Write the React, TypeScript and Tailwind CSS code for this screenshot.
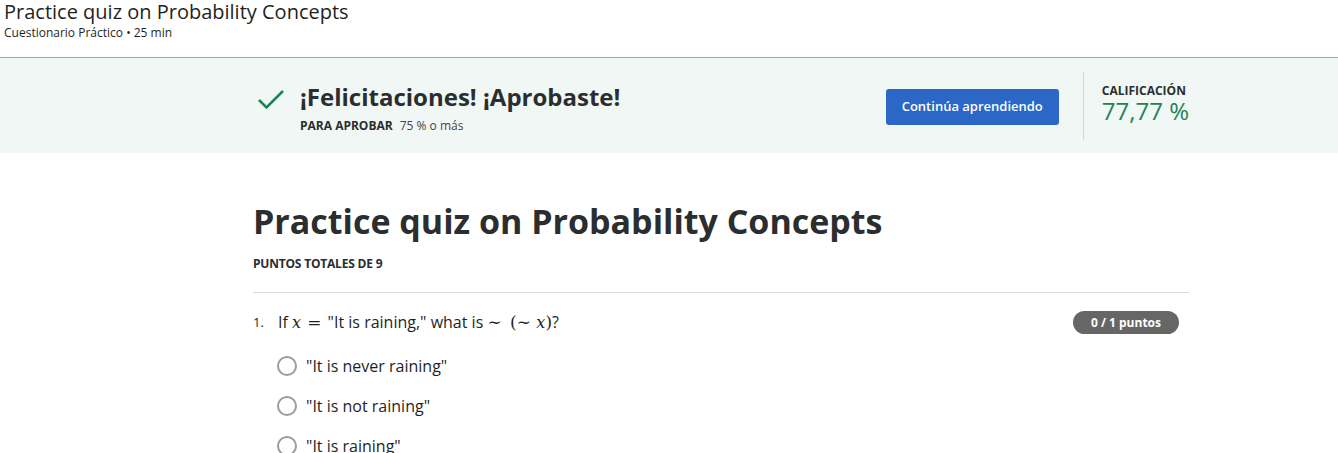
const font = { fontFamily: '"Open Sans", "Noto Sans", sans-serif' };
const serif = { fontFamily: '"DejaVu Serif", "Liberation Serif", serif' };

function Radio({ label }: { label: string }) {
  return (
    <label className="flex h-10 items-center gap-[9px] pl-6">
      <span className="h-5 w-5 rounded-full border-2 border-[#9c9c9c] bg-white" />
      <span className="text-base text-[#1f1f1f]">{label}</span>
    </label>
  );
}

export default function App() {
  return (
    <div style={font} className="h-[453px] w-[1338px] overflow-hidden bg-white text-[#1f1f1f]">
      <header className="h-[58px] border-b border-[#a8a8a8] pl-1">
        <h1 className="text-[20px] leading-[24px] text-[#1f1f1f]">Practice quiz on Probability Concepts</h1>
        <p className="mt-px text-[12px] leading-[16px] text-[#1f1f1f]">Cuestionario Práctico • 25 min</p>
      </header>

      <section className="flex h-[95px] items-center bg-[#f0f7f4]">
        <div className="ml-[253px] flex w-[936px] items-center justify-between">
          <div className="flex items-start gap-[14px] pl-[3px] pt-1">
            <svg width="30" height="24" viewBox="0 0 30 24" className="mt-[5px] text-[#1f8354]">
              <path d="M3 13 L10.5 20.5 L27 4" fill="none" stroke="currentColor" strokeWidth="2.6" />
            </svg>
            <div>
              <h2 className="text-[24px] leading-[30px] font-bold text-[#2b2d2f]">¡Felicitaciones! ¡Aprobaste!</h2>
              <p className="mt-[6px] text-[12px] leading-[16px]">
                <span className="font-bold text-[#2b2d2f]">PARA APROBAR</span>
                <span className="ml-[7px] text-[#444]">75 % o más</span>
              </p>
            </div>
          </div>
          <div className="flex items-center">
            <button className="mt-[3px] h-[36px] rounded-[3px] bg-[#2a67c7] px-[16px] text-[13px] font-semibold text-white">
              Continúa aprendiendo
            </button>
            <div className="ml-[24px] h-[68px] w-px bg-[#d5d5d5]" />
            <div className="ml-[18px] pb-[4px]">
              <p className="text-[12px] leading-[15px] font-bold text-[#2b2d2f]">CALIFICACIÓN</p>
              <p className="text-[24px] leading-[26px] text-[#1f8354]">77,77 %</p>
            </div>
          </div>
        </div>
      </section>

      <main className="ml-[253px] w-[936px] pt-[45px]">
        <h2 className="text-[34px] leading-[46px] font-bold text-[#2b2d2f]">Practice quiz on Probability Concepts</h2>
        <p className="mt-[12px] text-[12px] leading-[16px] font-bold tracking-[-0.2px] text-[#2b2d2f]">PUNTOS TOTALES DE 9</p>
        <hr className="mt-[20px] border-[#dcdcdc]" />

        <div className="mt-[17px] flex items-center justify-between">
          <div className="flex items-center text-base">
            <span className="w-[25px] text-[13px]">1.</span>
            <span>
              If <i style={serif} className="text-[16px]">x</i>{' '}
              <span style={serif} className="mx-[2px] text-[17px]">=</span> "It is raining," what is{' '}
              <span style={serif} className="text-[17px]">
                ∼ <span className="ml-[3px]">(∼ <i className="text-[16px]">x</i>)</span>
              </span>
              ?
            </span>
          </div>
          <span className="mr-[10px] flex h-[23px] items-center rounded-full bg-[#666] px-[18px] text-[12px] font-bold text-white">
            0 / 1 puntos
          </span>
        </div>

        <div className="mt-[10px]">
          <Radio label={'"It is never raining"'} />
          <Radio label={'"It is not raining"'} />
          <Radio label={'"It is raining"'} />
        </div>
      </main>
    </div>
  );
}
